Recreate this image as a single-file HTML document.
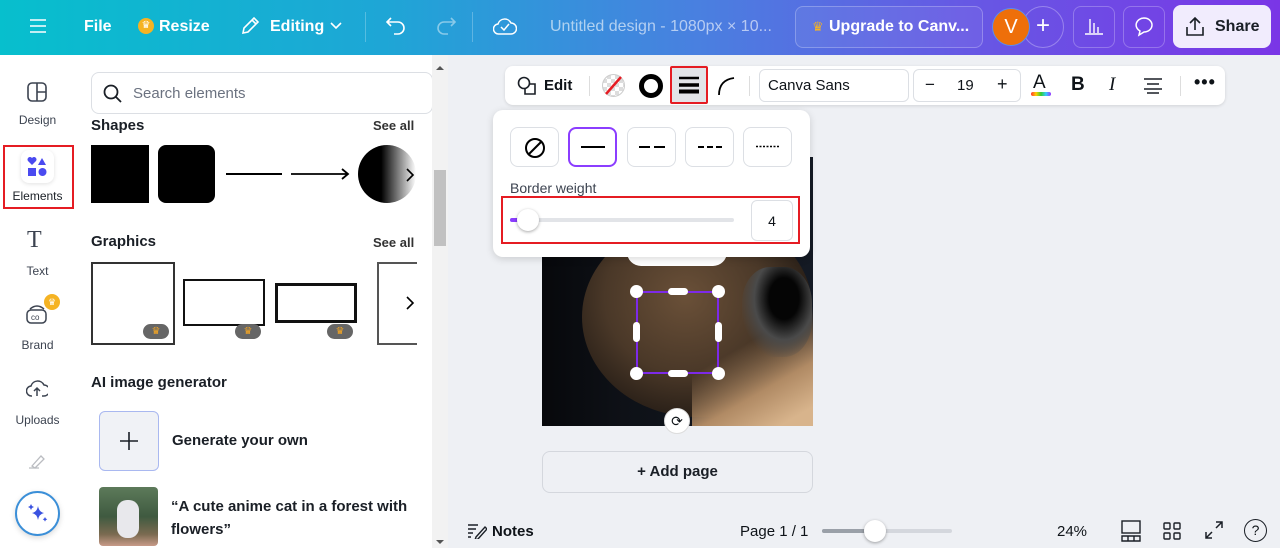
<!DOCTYPE html>
<html><head><meta charset="utf-8"><style>
*{box-sizing:border-box;margin:0;padding:0}
body{width:1280px;height:548px;overflow:hidden;font-family:"Liberation Sans",sans-serif;background:#eef0f4;position:relative;color:#0e1318}
.a{position:absolute}
.hdr{left:0;top:0;width:1280px;height:55px;background:linear-gradient(90deg,#07bfcd 0%,#1ea6d6 30%,#4a7fe0 55%,#6659e4 75%,#7a36e6 100%);color:#fff}
.hdr .t{position:absolute;font-size:16px;font-weight:bold;top:18px}
.btnb{position:absolute;border:1px solid rgba(255,255,255,.25);border-radius:8px}
.rail{left:0;top:55px;width:75px;height:493px;background:#fff}
.rail .l{position:absolute;width:75px;text-align:center;font-size:12px;color:#3c4350}
.panel{left:75px;top:55px;width:373px;height:493px;background:#fff}
.h{position:absolute;font-size:15px;font-weight:bold;color:#1a1f26}
.sa{position:absolute;font-size:13px;font-weight:bold;color:#333}
.crown{position:absolute;width:26px;height:15px;border-radius:8px;background:#666;color:#f5a623;font-size:10px;text-align:center;line-height:15px}
.tb{left:505px;top:66px;width:720px;height:39px;background:#fff;border-radius:8px;box-shadow:0 1px 3px rgba(0,0,0,.12)}
.pop{left:493px;top:110px;width:317px;height:147px;background:#fff;border-radius:10px;box-shadow:0 2px 8px rgba(0,0,0,.15)}
.sb{position:absolute;top:17px;width:49px;height:40px;border:1px solid #dcdfe4;border-radius:8px}
</style></head><body>
<div class="a hdr">
 <svg class="a" style="left:29px;top:18px" width="18" height="16"><path d="M1 2h16M1 8h16M1 14h16" stroke="#fff" stroke-width="1.6"/></svg>
 <span class="t" style="left:84px">File</span>
 <span class="a" style="left:138px;top:18px;width:16px;height:16px;border-radius:50%;background:#f5b323;color:#fff;font-size:10px;text-align:center;line-height:16px">♛</span>
 <span class="t" style="left:159px">Resize</span>
 <svg class="a" style="left:240px;top:16px" width="20" height="20"><path d="M3 17l1-5L14 2l4 4L8 16z M12 4l4 4" stroke="#fff" stroke-width="1.6" fill="none"/></svg>
 <span class="t" style="left:270px">Editing</span>
 <svg class="a" style="left:330px;top:22px" width="12" height="8"><path d="M1 1l5 5 5-5" stroke="#fff" stroke-width="1.6" fill="none"/></svg>
 <div class="a" style="left:365px;top:12px;width:1px;height:30px;background:rgba(255,255,255,.25)"></div>
 <svg class="a" style="left:386px;top:16px" width="22" height="20"><path d="M5 2L1 6l4 4M1 6h11a6 6 0 010 12H8" stroke="#fff" stroke-width="1.6" fill="none"/></svg>
 <svg class="a" style="left:434px;top:16px" width="22" height="20" opacity=".45"><path d="M17 2l4 4-4 4M21 6H10a6 6 0 000 12h4" stroke="#fff" stroke-width="1.6" fill="none"/></svg>
 <div class="a" style="left:472px;top:12px;width:1px;height:30px;background:rgba(255,255,255,.25)"></div>
 <svg class="a" style="left:493px;top:15px" width="24" height="22"><path d="M6 19a5 5 0 01-1-10 7 7 0 0113-1 5 5 0 010 11z M8 12l3 3 5-6" stroke="#fff" stroke-width="1.5" fill="none"/></svg>
 <span class="a" style="left:550px;top:18px;font-size:16px;color:rgba(255,255,255,.6)">Untitled design - 1080px × 10...</span>
 <div class="btnb" style="left:795px;top:6px;width:188px;height:42px;background:rgba(255,255,255,.06)"></div>
 <span class="a" style="left:812px;top:19px;color:#f5b323;font-size:13px">♛</span>
 <span class="t" style="left:829px">Upgrade to Canv...</span>
 <div class="a" style="left:1022px;top:6px;width:42px;height:42px;border-radius:50%;border:1px solid rgba(255,255,255,.3)"></div>
 <div class="a" style="left:992px;top:8px;width:38px;height:38px;border-radius:50%;background:#ee6f0a;border:1px solid #5a8cf0;text-align:center;line-height:37px;font-size:20px">V</div>
 <span class="a" style="left:1036px;top:12px;font-size:24px;font-weight:300">+</span>
 <div class="btnb" style="left:1073px;top:6px;width:42px;height:42px"></div>
 <svg class="a" style="left:1084px;top:17px" width="20" height="18"><path d="M6 2v14M10 6v10M14 10v6M1 17h18" stroke="#fff" stroke-width="1.4"/></svg>
 <div class="btnb" style="left:1123px;top:6px;width:42px;height:42px"></div>
 <svg class="a" style="left:1133px;top:16px" width="22" height="22"><path d="M11 2a8 7 0 110 14l-5 3 1-4A8 7 0 0111 2z" stroke="#fff" stroke-width="1.5" fill="none"/></svg>
 <div class="a" style="left:1173px;top:5px;width:98px;height:43px;border-radius:8px;background:#f1ecfd"></div>
 <svg class="a" style="left:1184px;top:15px" width="22" height="22"><path d="M11 15V3M6 8l5-5 5 5M3 12v8h16v-8" stroke="#1a1f26" stroke-width="1.6" fill="none"/></svg>
 <span class="a" style="left:1215px;top:18px;font-size:16px;font-weight:bold;color:#1a1f26">Share</span>
</div>

<div class="a rail">
 <svg class="a" style="left:27px;top:27px" width="20" height="20"><rect x="1" y="1" width="18" height="18" rx="4" stroke="#3c4350" stroke-width="1.6" fill="none"/><path d="M10 1v18M10 10h9" stroke="#3c4350" stroke-width="1.6"/></svg>
 <span class="l" style="top:58px">Design</span>
 <div class="a" style="left:3px;top:90px;width:71px;height:64px;border:2px solid #e51c23"></div>
 <div class="a" style="left:21px;top:95px;width:33px;height:33px;border-radius:8px;background:#fff;box-shadow:0 1px 4px rgba(0,0,0,.12)"></div>
 <svg class="a" style="left:27px;top:102px" width="21" height="19"><path d="M5 8L1 4a2.5 2.5 0 014-3 2.5 2.5 0 014 3z" fill="#4a4af0"/><path d="M15 1l4 7h-8z" fill="#4a4af0"/><rect x="1" y="11" width="8" height="8" fill="#4a4af0"/><circle cx="15.5" cy="15" r="4" fill="#4a4af0"/></svg>
 <span class="l" style="top:134px;color:#1a1f26">Elements</span>
 <span class="a" style="left:27px;top:172px;font-family:'Liberation Serif',serif;font-size:24px;color:#3c4350">T</span>
 <span class="l" style="top:209px">Text</span>
 <svg class="a" style="left:25px;top:248px" width="24" height="22"><rect x="2" y="7" width="19" height="13" rx="4" stroke="#3c4350" stroke-width="1.5" fill="none"/><path d="M5 6q7-6 14 0" stroke="#3c4350" stroke-width="1.5" fill="none"/><text x="6" y="17" font-size="8" fill="#3c4350" font-family="Liberation Sans">co</text></svg>
 <div class="a" style="left:44px;top:239px;width:16px;height:16px;border-radius:50%;background:#f5b323;color:#fff;font-size:9px;text-align:center;line-height:16px">♛</div>
 <span class="l" style="top:283px">Brand</span>
 <svg class="a" style="left:26px;top:325px" width="22" height="18"><path d="M6 16a5 5 0 01-1-10 7 7 0 0113-1 5 5 0 010 11h-2 M11 16V8M8 11l3-3 3 3" stroke="#3c4350" stroke-width="1.5" fill="none"/></svg>
 <span class="l" style="top:358px">Uploads</span>
 <svg class="a" style="left:28px;top:398px" width="20" height="16" opacity=".35"><path d="M4 13L13 3l3 3-9 9z M1 15h10" stroke="#3c4350" stroke-width="1.3" fill="none"/></svg>
 <div class="a" style="left:15px;top:436px;width:45px;height:45px;border-radius:50%;border:2px solid #3b8fd8;background:#fff;box-shadow:0 2px 6px rgba(0,0,0,.15)"></div>
 <svg class="a" style="left:27px;top:447px" width="22" height="22"><path d="M11 4q1 6 6 7-5 1-6 7-1-6-6-7 5-1 6-7z" fill="#3a52e0"/><path d="M4 2l1 2 2 1-2 1-1 2-1-2-2-1 2-1z M18 15l.8 1.5 1.5.8-1.5.8-.8 1.5-.8-1.5-1.5-.8 1.5-.8z" fill="#3a52e0"/></svg>
</div>

<div class="a panel">
 <div class="a" style="left:16px;top:17px;width:342px;height:42px;border:1px solid #dcdfe4;border-radius:8px"></div>
 <svg class="a" style="left:28px;top:29px" width="20" height="20"><circle cx="8" cy="8" r="6.5" stroke="#1a1f26" stroke-width="1.8" fill="none"/><path d="M13 13l5 5" stroke="#1a1f26" stroke-width="1.8"/></svg>
 <span class="a" style="left:58px;top:30px;font-size:15px;color:#6b7280">Search elements</span>
 <span class="h" style="left:16px;top:62px">Shapes</span><span class="sa" style="left:298px;top:63px">See all</span>
 <div class="a" style="left:16px;top:90px;width:58px;height:58px;background:#000"></div>
 <div class="a" style="left:83px;top:90px;width:57px;height:58px;background:#000;border-radius:8px"></div>
 <div class="a" style="left:151px;top:118px;width:56px;height:2px;background:#000"></div>
 <svg class="a" style="left:216px;top:113px" width="60" height="12"><path d="M0 6h57M51 1l6 5-6 5" stroke="#000" stroke-width="1.8" fill="none"/></svg>
 <div class="a" style="left:283px;top:90px;width:58px;height:58px;border-radius:50%;background:linear-gradient(90deg,#000 40%,#fff 100%)"></div>
 <svg class="a" style="left:330px;top:112px" width="10" height="16"><path d="M2 2l6 6-6 6" stroke="#000" stroke-width="1.6" fill="none"/></svg>
 <span class="h" style="left:16px;top:178px">Graphics</span><span class="sa" style="left:298px;top:180px">See all</span>
 <div class="a" style="left:16px;top:207px;width:84px;height:83px;border:2px solid #333"></div>
 <div class="crown" style="left:68px;top:269px">♛</div>
 <div class="a" style="left:108px;top:224px;width:82px;height:47px;border:2px solid #111"></div>
 <div class="crown" style="left:160px;top:269px">♛</div>
 <div class="a" style="left:200px;top:228px;width:82px;height:40px;border:3px solid #111"></div>
 <div class="crown" style="left:252px;top:269px">♛</div>
 <div class="a" style="left:302px;top:207px;width:40px;height:83px;border:2px solid #555;border-right:none"></div>
 <svg class="a" style="left:330px;top:240px" width="10" height="16"><path d="M2 2l6 6-6 6" stroke="#000" stroke-width="1.6" fill="none"/></svg>
 <span class="h" style="left:16px;top:319px">AI image generator</span>
 <div class="a" style="left:24px;top:356px;width:60px;height:60px;border-radius:6px;border:1.5px solid #a9b8f0;background:#f0f2f6"></div>
 <svg class="a" style="left:44px;top:376px" width="20" height="20"><path d="M10 1v18M1 10h18" stroke="#1a1f26" stroke-width="1.6"/></svg>
 <span class="a" style="left:97px;top:377px;font-size:15px;font-weight:bold;color:#1a1f26">Generate your own</span>
 <div class="a" style="left:24px;top:432px;width:59px;height:59px;border-radius:4px;background:linear-gradient(180deg,#5d7a5a,#3f5a40 50%,#7a6a50 80%,#c89a88)"></div>
 <div class="a" style="left:42px;top:445px;width:22px;height:38px;border-radius:10px;background:#e8e8ec"></div>
 <span class="a" style="left:96px;top:440px;font-size:15px;font-weight:bold;color:#1a1f26;line-height:23px;width:250px">“A cute anime cat in a forest with flowers”</span>
 <div class="a" style="left:357px;top:0;width:16px;height:493px;background:#f2f2f2"></div>
 <div class="a" style="left:359px;top:115px;width:12px;height:76px;background:#c1c1c1"></div>
 <svg class="a" style="left:360px;top:10px" width="10" height="6"><path d="M1 5l4-4 4 4z" fill="#555"/></svg>
 <svg class="a" style="left:360px;top:484px" width="10" height="6"><path d="M1 1l4 4 4-4z" fill="#555"/></svg>
</div>

<div class="a" style="left:542px;top:157px;width:271px;height:269px;background:linear-gradient(90deg,#07080b 0%,#0e1117 30%,#141a24 100%);overflow:hidden">
 <div class="a" style="left:40px;top:60px;width:230px;height:200px;border-radius:50% 45% 40% 50%;background:radial-gradient(ellipse at 45% 40%,#6a5038 0%,#4a3828 45%,#2a2018 70%,rgba(20,20,24,0) 85%)"></div>
 <div class="a" style="left:150px;top:150px;width:150px;height:140px;background:linear-gradient(150deg,rgba(0,0,0,0) 30%,#b08a64 55%,#d8b48c 75%);"></div>
 <div class="a" style="left:200px;top:110px;width:70px;height:90px;border-radius:40%;background:radial-gradient(ellipse at 60% 35%,#050505 0 25%,#4a4a4a 50%,rgba(80,80,80,0) 75%)"></div>
</div>
<div class="a" style="left:627px;top:240px;width:100px;height:26px;background:#fff;border-radius:0 0 14px 14px"></div>
<div class="a" style="left:636px;top:291px;width:83px;height:83px;border:2px solid #7d2ae8"></div>
<div class="a" style="left:630px;top:285px;width:13px;height:13px;border-radius:50%;background:#fff"></div>
<div class="a" style="left:712px;top:285px;width:13px;height:13px;border-radius:50%;background:#fff"></div>
<div class="a" style="left:630px;top:367px;width:13px;height:13px;border-radius:50%;background:#fff"></div>
<div class="a" style="left:712px;top:367px;width:13px;height:13px;border-radius:50%;background:#fff"></div>
<div class="a" style="left:668px;top:288px;width:20px;height:7px;border-radius:4px;background:#fff"></div>
<div class="a" style="left:668px;top:370px;width:20px;height:7px;border-radius:4px;background:#fff"></div>
<div class="a" style="left:633px;top:322px;width:7px;height:20px;border-radius:4px;background:#fff"></div>
<div class="a" style="left:715px;top:322px;width:7px;height:20px;border-radius:4px;background:#fff"></div>
<div class="a" style="left:664px;top:408px;width:26px;height:26px;border-radius:50%;background:#fff;border:1px solid #ddd;text-align:center;line-height:24px;font-size:14px">⟳</div>

<div class="a" style="left:542px;top:451px;width:271px;height:42px;border:1px solid #d4d7dd;border-radius:8px;text-align:center;line-height:40px;font-size:15px;font-weight:bold;color:#1a1f26">+ Add page</div>

<div class="a tb">
 <svg class="a" style="left:12px;top:10px" width="20" height="20"><circle cx="7" cy="7" r="5.5" stroke="#1a1f26" stroke-width="1.6" fill="none"/><path d="M8 12v6h10V8h-6" stroke="#1a1f26" stroke-width="1.6" fill="none"/></svg>
 <span class="a" style="left:39px;top:11px;font-size:15px;font-weight:bold">Edit</span>
 <div class="a" style="left:84px;top:10px;width:1px;height:20px;background:#ddd"></div>
 <div class="a" style="left:97px;top:8px;width:23px;height:23px;border-radius:50%;background:repeating-conic-gradient(#ddd 0 25%,#fff 0 50%) 0 0/8px 8px;border:1px solid #ccc"></div>
 <svg class="a" style="left:97px;top:8px" width="23" height="23"><path d="M19 3L4 20" stroke="#e51c23" stroke-width="2.5"/></svg>
 <div class="a" style="left:134px;top:8px;width:24px;height:24px;border-radius:50%;border:5px solid #000"></div>
 <div class="a" style="left:165px;top:0;width:38px;height:38px;border:2px solid #e51c23;background:#e2e4e8;border-radius:2px"></div>
 <svg class="a" style="left:174px;top:10px" width="20" height="18"><path d="M0 2h20" stroke="#000" stroke-width="2.5"/><path d="M0 9h20" stroke="#000" stroke-width="3.5"/><path d="M0 15.5h20" stroke="#000" stroke-width="4"/></svg>
 <svg class="a" style="left:212px;top:10px" width="20" height="20"><path d="M2 19Q2 4 17 2" stroke="#000" stroke-width="1.8" fill="none"/></svg>
 <div class="a" style="left:244px;top:10px;width:1px;height:20px;background:#ddd"></div>
 <div class="a" style="left:254px;top:3px;width:150px;height:33px;border:1px solid #dcdfe4;border-radius:6px"></div>
 <span class="a" style="left:263px;top:11px;font-size:15px">Canva Sans</span>
 <div class="a" style="left:408px;top:3px;width:108px;height:33px;border:1px solid #dcdfe4;border-radius:6px"></div>
 <span class="a" style="left:420px;top:9px;font-size:17px">−</span>
 <span class="a" style="left:452px;top:11px;font-size:15px">19</span>
 <span class="a" style="left:492px;top:8px;font-size:18px">+</span>
 <span class="a" style="left:528px;top:6px;font-size:19px">A</span>
 <div class="a" style="left:526px;top:26px;width:20px;height:4px;border-radius:2px;background:linear-gradient(90deg,#f33,#fc0,#3c3,#3cf,#93f)"></div>
 <span class="a" style="left:566px;top:8px;font-size:19px;font-weight:bold">B</span>
 <span class="a" style="left:604px;top:8px;font-size:19px;font-style:italic;font-family:'Liberation Serif',serif">I</span>
 <svg class="a" style="left:638px;top:11px" width="20" height="17"><path d="M1 2h18M4 7h12M1 12h18M4 16h12" stroke="#1a1f26" stroke-width="1.6"/></svg>
 <div class="a" style="left:675px;top:10px;width:1px;height:20px;background:#ddd"></div>
 <span class="a" style="left:689px;top:6px;font-size:18px;font-weight:bold;letter-spacing:1px">•••</span>
</div>

<div class="a pop">
 <div class="sb" style="left:17px"></div>
 <svg class="a" style="left:31px;top:27px" width="22" height="22"><circle cx="11" cy="11" r="9" stroke="#000" stroke-width="2" fill="none"/><path d="M4 18L18 4" stroke="#000" stroke-width="2"/></svg>
 <div class="sb" style="left:75px;border:2px solid #8b3dff"></div>
 <div class="a" style="left:88px;top:36px;width:24px;height:2px;background:#000"></div>
 <div class="sb" style="left:134px"></div>
 <svg class="a" style="left:146px;top:35px" width="26" height="4"><path d="M0 2h26" stroke="#000" stroke-width="2" stroke-dasharray="11 4"/></svg>
 <div class="sb" style="left:192px"></div>
 <svg class="a" style="left:205px;top:35px" width="24" height="4"><path d="M0 2h24" stroke="#000" stroke-width="2" stroke-dasharray="6 3"/></svg>
 <div class="sb" style="left:250px"></div>
 <svg class="a" style="left:263px;top:35px" width="24" height="3"><path d="M0 1.5h24" stroke="#000" stroke-width="1.5" stroke-dasharray="2 1.5"/></svg>
 <span class="a" style="left:17px;top:70px;font-size:14px;color:#3c4350">Border weight</span>
 <div class="a" style="left:8px;top:86px;width:299px;height:48px;border:2px solid #e51c23"></div>
 <div class="a" style="left:17px;top:108px;width:224px;height:4px;border-radius:2px;background:#e2e4e8"></div>
 <div class="a" style="left:17px;top:108px;width:20px;height:4px;border-radius:2px;background:#8b3dff"></div>
 <div class="a" style="left:24px;top:99px;width:22px;height:22px;border-radius:50%;background:#fff;box-shadow:0 1px 3px rgba(0,0,0,.35)"></div>
 <div class="a" style="left:258px;top:90px;width:42px;height:41px;border:1px solid #dcdfe4;border-radius:6px;text-align:center;line-height:40px;font-size:14px">4</div>
</div>

<svg class="a" style="left:467px;top:523px" width="20" height="16"><path d="M1 2h10M1 6h8M1 10h5M1 14h3M9 14l9-10 2 2-9 10-3 1z" stroke="#1a1f26" stroke-width="1.4" fill="none"/></svg>
<span class="a" style="left:492px;top:523px;font-size:15px;font-weight:bold">Notes</span>
<span class="a" style="left:740px;top:523px;font-size:15px">Page 1 / 1</span>
<div class="a" style="left:822px;top:529px;width:130px;height:4px;border-radius:2px;background:#d4d7dd"></div>
<div class="a" style="left:822px;top:529px;width:50px;height:4px;border-radius:2px;background:#9aa0a8"></div>
<div class="a" style="left:864px;top:520px;width:22px;height:22px;border-radius:50%;background:#fff;box-shadow:0 1px 3px rgba(0,0,0,.35)"></div>
<span class="a" style="left:1057px;top:523px;font-size:15px">24%</span>
<svg class="a" style="left:1121px;top:520px" width="20" height="22"><rect x="1" y="1" width="18" height="12" stroke="#1a1f26" stroke-width="1.4" fill="none"/><path d="M1 16h18v5H1zM7 16v5M13 16v5" stroke="#1a1f26" stroke-width="1.4" fill="none"/></svg>
<svg class="a" style="left:1163px;top:522px" width="18" height="18"><rect x="1" y="1" width="6" height="6" rx="1" stroke="#1a1f26" stroke-width="1.4" fill="none"/><rect x="11" y="1" width="6" height="6" rx="1" stroke="#1a1f26" stroke-width="1.4" fill="none"/><rect x="1" y="11" width="6" height="6" rx="1" stroke="#1a1f26" stroke-width="1.4" fill="none"/><rect x="11" y="11" width="6" height="6" rx="1" stroke="#1a1f26" stroke-width="1.4" fill="none"/></svg>
<svg class="a" style="left:1205px;top:521px" width="18" height="18"><path d="M11 1h6v6M17 1l-6 6M7 17H1v-6M1 17l6-6" stroke="#1a1f26" stroke-width="1.5" fill="none"/></svg>
<div class="a" style="left:1244px;top:519px;width:23px;height:23px;border-radius:50%;border:1.6px solid #1a1f26;text-align:center;line-height:20px;font-size:14px">?</div>
</body></html>
